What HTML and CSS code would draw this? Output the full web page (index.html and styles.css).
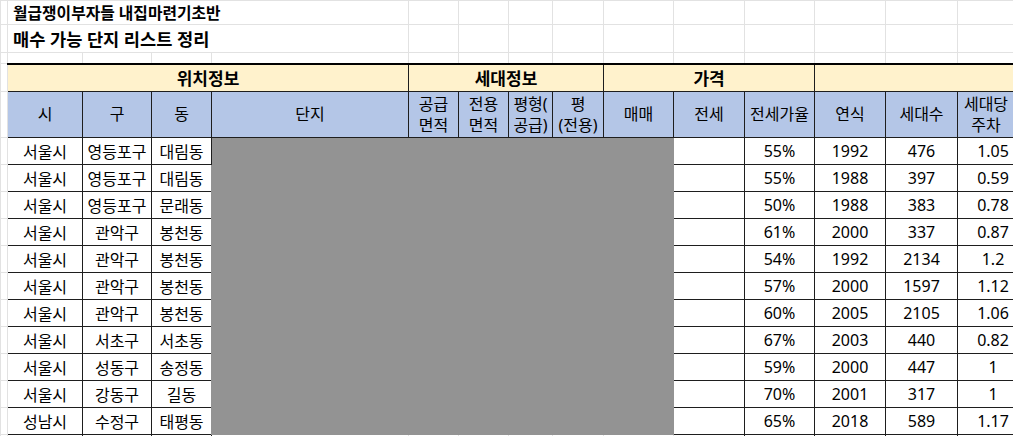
FILE: index.html
```html
<!DOCTYPE html>
<html lang="ko">
<head>
  <meta charset="UTF-8" />
  <meta name="viewport" content="width=device-width, initial-scale=1.0" />
  <title>매수 가능 단지 리스트 정리</title>
  <link rel="stylesheet" href="styles.css">
</head>
<body>

  <table class="sheet">
    <colgroup>
      <col class="c-gutter">
      <col style="width:75px">
      <col style="width:69px">
      <col style="width:60px">
      <col style="width:197px">
      <col style="width:50px">
      <col style="width:50px">
      <col style="width:44px">
      <col style="width:51px">
      <col style="width:70px">
      <col style="width:71px">
      <col style="width:70px">
      <col style="width:71px">
      <col style="width:72px">
      <col style="width:71px">
    </colgroup>

    <tr class="r-title1">
      <td class="g"></td>
      <td class="title small" colspan="4">월급쟁이부자들 내집마련기초반</td>
      <td class="g"></td><td class="g"></td><td class="g"></td><td class="g"></td><td class="g"></td>
      <td class="g"></td><td class="g"></td><td class="g"></td><td class="g"></td><td class="g"></td>
    </tr>
    <tr class="r-title2">
      <td class="g"></td>
      <td class="title" colspan="4">매수 가능 단지 리스트 정리</td>
      <td class="g"></td><td class="g"></td><td class="g"></td><td class="g"></td><td class="g"></td>
      <td class="g"></td><td class="g"></td><td class="g"></td><td class="g"></td><td class="g"></td>
    </tr>
    <tr class="r-gap">
      <td class="g"></td><td class="g"></td><td class="g"></td><td class="g"></td><td class="g"></td>
      <td class="g"></td><td class="g"></td><td class="g"></td><td class="g"></td><td class="g"></td>
      <td class="g"></td><td class="g"></td><td class="g"></td><td class="g"></td><td class="g"></td>
    </tr>

    <tr class="r-group">
      <td class="g"></td>
      <th class="group" colspan="4">위치정보</th>
      <th class="group" colspan="4">세대정보</th>
      <th class="group" colspan="3">가격</th>
      <th class="group" colspan="3"></th>
    </tr>
    <tr class="r-head">
      <td class="g"></td>
      <th>시</th>
      <th>구</th>
      <th>동</th>
      <th>단지</th>
      <th>공급<br>면적</th>
      <th>전용<br>면적</th>
      <th>평형(<br>공급)</th>
      <th>평<br>(전용)</th>
      <th>매매</th>
      <th>전세</th>
      <th>전세가율</th>
      <th>연식</th>
      <th>세대수</th>
      <th class="last">세대당<br>주차</th>
    </tr>

    <tr class="r-data">
      <td class="g"></td>
      <td>서울시</td><td>영등포구</td><td>대림동</td>
      <td class="hidden" colspan="6" rowspan="11"></td>
      <td></td><td>55%</td><td>1992</td><td>476</td><td>1.05</td>
    </tr>
    <tr class="r-data">
      <td class="g"></td>
      <td>서울시</td><td>영등포구</td><td>대림동</td>
      <td></td><td>55%</td><td>1988</td><td>397</td><td>0.59</td>
    </tr>
    <tr class="r-data">
      <td class="g"></td>
      <td>서울시</td><td>영등포구</td><td>문래동</td>
      <td></td><td>50%</td><td>1988</td><td>383</td><td>0.78</td>
    </tr>
    <tr class="r-data">
      <td class="g"></td>
      <td>서울시</td><td>관악구</td><td>봉천동</td>
      <td></td><td>61%</td><td>2000</td><td>337</td><td>0.87</td>
    </tr>
    <tr class="r-data">
      <td class="g"></td>
      <td>서울시</td><td>관악구</td><td>봉천동</td>
      <td></td><td>54%</td><td>1992</td><td>2134</td><td>1.2</td>
    </tr>
    <tr class="r-data">
      <td class="g"></td>
      <td>서울시</td><td>관악구</td><td>봉천동</td>
      <td></td><td>57%</td><td>2000</td><td>1597</td><td>1.12</td>
    </tr>
    <tr class="r-data">
      <td class="g"></td>
      <td>서울시</td><td>관악구</td><td>봉천동</td>
      <td></td><td>60%</td><td>2005</td><td>2105</td><td>1.06</td>
    </tr>
    <tr class="r-data">
      <td class="g"></td>
      <td>서울시</td><td>서초구</td><td>서초동</td>
      <td></td><td>67%</td><td>2003</td><td>440</td><td>0.82</td>
    </tr>
    <tr class="r-data">
      <td class="g"></td>
      <td>서울시</td><td>성동구</td><td>송정동</td>
      <td></td><td>59%</td><td>2000</td><td>447</td><td>1</td>
    </tr>
    <tr class="r-data">
      <td class="g"></td>
      <td>서울시</td><td>강동구</td><td>길동</td>
      <td></td><td>70%</td><td>2001</td><td>317</td><td>1</td>
    </tr>
    <tr class="r-data">
      <td class="g"></td>
      <td>성남시</td><td>수정구</td><td>태평동</td>
      <td></td><td>65%</td><td>2018</td><td>589</td><td>1.17</td>
    </tr>
    <tr class="r-data">
      <td class="g"></td>
      <td></td><td></td><td></td><td class="g"></td><td class="g"></td><td class="g"></td><td class="g"></td><td class="g"></td><td class="g"></td>
      <td></td><td></td><td></td><td></td><td></td>
    </tr>
  </table>

</body>
</html>
```

FILE: styles.css
```css
body {
  margin: 0;
  background: #fff;
  font-family: "Noto Sans", "Noto Sans CJK KR", sans-serif;
  color: #000;
  overflow: hidden;
}
.sheet {
  border-collapse: collapse;
  table-layout: fixed;
  width: 1028px;
}
.c-gutter {
  width: 7px;
}
td, th {
  padding: 0;
  border: 1px solid #1e1e1e;
  text-align: center;
  vertical-align: middle;
  font-size: 16px;
  font-weight: normal;
  white-space: nowrap;
  overflow: hidden;
}
td.g {
  border: 1px solid #e2e2e2;
}
.r-title1 {
  height: 24px;
}
.r-title2 {
  height: 28px;
}
.r-gap {
  height: 11px;
}
.title {
  border: 1px solid #e2e2e2;
  text-align: left;
  padding-left: 5px;
  font-weight: bold;
  font-size: 17.6px;
}
.title.small {
  font-size: 15.8px;
}
.r-group {
  height: 28px;
}
.group {
  background: #fff2cc;
  font-weight: bold;
  font-size: 17px;
  border-top: 2px solid #000;
}
.r-head {
  height: 46px;
}
.r-head th {
  background: #b4c6e7;
  line-height: 21px;
}
.r-head th.last {
  padding-right: 14px;
}
.r-data {
  height: 27px;
}
.hidden {
  background: #939393;
  border-color: #939393;
}
```
